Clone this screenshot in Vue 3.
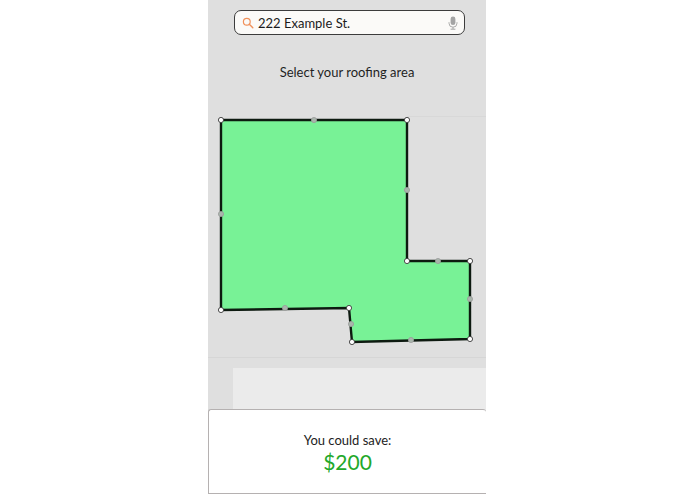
<template>
  <div class="page">
    <div class="phone">
      <div class="search">
        <svg class="lens" width="12" height="12" viewBox="0 0 12 12">
          <circle cx="4.8" cy="4.8" r="3.4" fill="none" stroke="#f0905a" stroke-width="1.2" />
          <line x1="7.3" y1="7.3" x2="10.8" y2="10.8" stroke="#f0905a" stroke-width="1.4" stroke-linecap="round" />
        </svg>
        <span class="address">222 Example St.</span>
        <svg class="mic" width="10" height="14" viewBox="0 0 10 14">
          <rect x="2.6" y="0.5" width="4.8" height="8.6" rx="2.4" fill="#a4a4a4" />
          <path d="M1 6.2v1a4 4 0 0 0 8 0v-1" fill="none" stroke="#a4a4a4" stroke-width="0.9" />
          <line x1="5" y1="11.2" x2="5" y2="13" stroke="#a4a4a4" stroke-width="1" />
          <line x1="2.6" y1="13.2" x2="7.4" y2="13.2" stroke="#a4a4a4" stroke-width="1" />
        </svg>
      </div>

      <div class="title">Select your roofing area</div>

      <svg class="map" width="278" height="242" viewBox="208 116 278 242">
        <line x1="407" y1="116.5" x2="486" y2="116.5" stroke="#d8d8d8" />
        <line x1="208" y1="357.5" x2="486" y2="357.5" stroke="#d6d6d6" />
        <polygon :points="outline" fill="#78f296" stroke="#0d1a10" stroke-width="2.4" stroke-linejoin="miter" />
        <circle v-for="(p, i) in mids" :key="'m' + i" :cx="p[0]" :cy="p[1]" r="2.6" fill="#a9b5ac" stroke="#9a9a9a" stroke-width="0.8" />
        <circle v-for="(p, i) in corners" :key="'c' + i" :cx="p[0]" :cy="p[1]" r="2.6" fill="#fff" stroke="#3a3a3a" stroke-width="0.9" />
      </svg>

      <div class="lower">
        <div class="sheet"></div>
      </div>

      <div class="card">
        <div class="save">You could save:</div>
        <div class="amount">$200</div>
      </div>
    </div>
  </div>
</template>

<script setup>
const corners = [
  [221, 120],
  [407, 120],
  [407, 261],
  [470, 261],
  [470, 339],
  [352, 342],
  [349, 308],
  [221, 310],
]
const mids = [
  [314, 120],
  [407, 190],
  [438, 261],
  [470, 299],
  [411, 340],
  [351, 324],
  [285, 308],
  [221, 214],
]
const outline = corners.map((p) => p.join(',')).join(' ')
</script>

<style>
html,
body {
  margin: 0;
  background: #fff;
}
</style>

<style scoped>
.page {
  width: 695px;
  height: 494px;
  overflow: hidden;
  background: #fff;
  font-family: Lato, "Open Sans", sans-serif;
}
.phone {
  width: 278px;
  height: 494px;
  margin-left: 208px;
  background: #dfdfdf;
  display: flex;
  flex-direction: column;
}
.search {
  margin: 10px 21px 0 26px;
  height: 23px;
  display: flex;
  align-items: center;
  background: #fbfaf8;
  border: 1px solid #3c3c3c;
  border-radius: 7px;
  padding: 0 6px 0 7px;
}
.lens {
  margin-right: 4px;
  flex: none;
}
.address {
  flex: 1;
  font-size: 13px;
  color: #1c1c1c;
}
.mic {
  flex: none;
}
.title {
  margin-top: 29px;
  text-align: center;
  font-size: 13px;
  line-height: 17px;
  color: #1f1f1f;
}
.map {
  display: block;
  margin-top: 35px;
  flex: none;
}
.lower {
  flex: 1;
  padding: 10px 0 0 25px;
  min-height: 0;
}
.sheet {
  height: 42px;
  background: #ebebeb;
}
.card {
  box-sizing: border-box;
  height: 85px;
  background: #fff;
  border: 1px solid #b5b1b1;
  border-right: none;
  border-radius: 3px 3px 0 0;
  text-align: center;
  padding-top: 22px;
}
.save {
  font-size: 13px;
  line-height: 17px;
  color: #222;
}
.amount {
  font-size: 21px;
  line-height: 26px;
  color: #22a82a;
}
</style>
